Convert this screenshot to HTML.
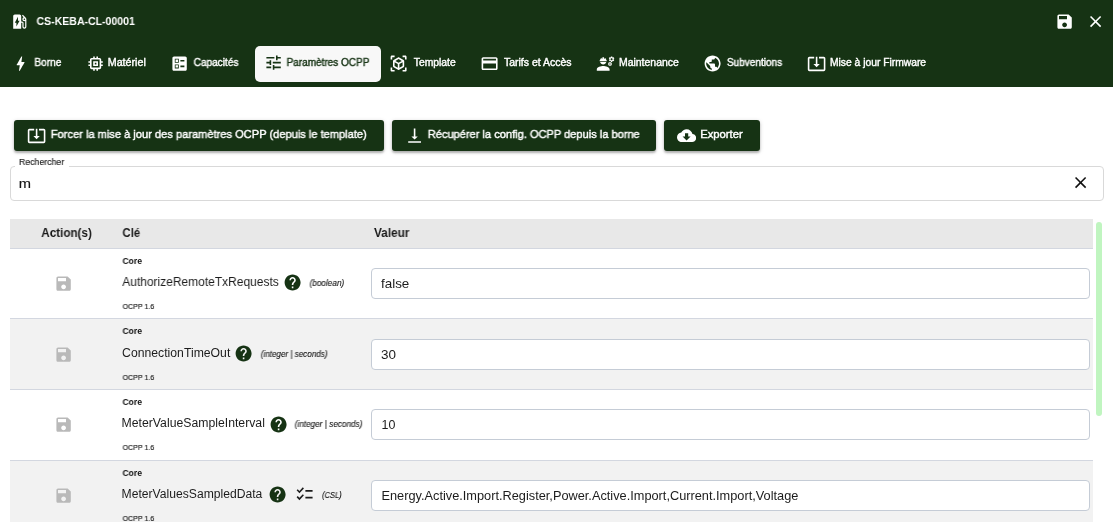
<!DOCTYPE html>
<html lang="fr"><head><meta charset="utf-8"><title>CS-KEBA-CL-00001 - Paramètres OCPP</title><style>
html,body{margin:0;padding:0;background:#fff}
body{width:1113px;height:527px;overflow:hidden;position:relative;font-family:"Liberation Sans",sans-serif}
.t{will-change:transform;position:absolute;white-space:nowrap;line-height:1;transform-origin:0 50%;display:inline-block}
.ic{position:absolute;display:block}
</style></head><body>
<div style="position:absolute;left:0;top:0;width:1113px;height:87px;background:#163314"></div>
<svg class="ic" style="left:10.10px;top:11.90px;width:19.2px;height:19.2px;" viewBox="0 0 24 24"><path fill="#fff" d="M19.77 7.23l.01-.01-3.72-3.72L15 4.56l2.11 2.11c-.94.36-1.61 1.26-1.61 2.33 0 1.38 1.12 2.5 2.5 2.5.36 0 .69-.08 1-.21v7.21c0 .55-.45 1-1 1s-1-.45-1-1V14c0-1.1-.9-2-2-2h-1V5c0-1.1-.9-2-2-2H6c-1.1 0-2 .9-2 2v16h10v-7.5h1.5v5c0 1.38 1.12 2.5 2.5 2.5s2.5-1.12 2.5-2.5V9c0-.69-.28-1.32-.73-1.77zM18 10c-.55 0-1-.45-1-1s.45-1 1-1 1 .45 1 1-.45 1-1 1zM8 18v-4.5H6L10 6v5h2l-4 7z"/></svg>
<span id="t1" class="t " style="left:36.40px;top:15.52px;font-size:11.2px;color:#fff;font-weight:700;transform:translateX(0.50px) scaleX(0.9417);">CS-KEBA-CL-00001</span>
<svg class="ic" style="left:1055.45px;top:11.60px;width:19.2px;height:19.2px;" viewBox="0 0 24 24"><path fill="#fff" d="M17 3H5c-1.11 0-2 .9-2 2v14c0 1.1.89 2 2 2h14c1.1 0 2-.9 2-2V7l-4-4zm-5 16c-1.66 0-3-1.34-3-3s1.34-3 3-3 3 1.34 3 3-1.34 3-3 3zm3-10H5V5h10v4z"/></svg>
<svg class="ic" style="left:1086.45px;top:12.00px;width:19.2px;height:19.2px;" viewBox="0 0 24 24"><path fill="#fff" d="M19 6.41L17.59 5 12 10.59 6.41 5 5 6.41 10.59 12 5 17.59 6.41 19 12 13.41 17.59 19 19 17.59 13.41 12z"/></svg>
<div style="position:absolute;left:255px;top:46px;width:126px;height:36px;background:#f8f8f8;border-radius:5px"></div>
<svg class="ic" style="left:11.15px;top:53.80px;width:19.2px;height:19.2px;" viewBox="0 0 24 24"><path fill="#fff" d="M11 21h-1l1-7H7.5c-.58 0-.57-.32-.38-.66.19-.34.05-.08.07-.12C8.48 10.94 10.42 7.54 13 3h1l-1 7h3.5c.49 0 .56.33.47.51l-.07.15C12.96 17.55 11 21 11 21z"/></svg>
<span id="t2" class="t " style="left:34.60px;top:57.58px;font-size:10.3px;color:#fff;font-weight:400;-webkit-text-stroke:0.4px #fff;transform:translateX(-0.51px) scaleX(0.9787);">Borne</span>
<svg class="ic" style="left:86.00px;top:53.80px;width:19.2px;height:19.2px;" viewBox="0 0 24 24"><path fill="#fff" d="M15 9H9v6h6V9zm-2 4h-2v-2h2v2zm8-2V9h-2V7c0-1.1-.9-2-2-2h-2V3h-2v2h-2V3H9v2H7c-1.1 0-2 .9-2 2v2H3v2h2v2H3v2h2v2c0 1.1.9 2 2 2h2v2h2v-2h2v2h2v-2h2c1.1 0 2-.9 2-2v-2h2v-2h-2v-2h2zm-4 6H7V7h10v10z"/></svg>
<span id="t3" class="t " style="left:108.30px;top:57.58px;font-size:10.3px;color:#fff;font-weight:400;-webkit-text-stroke:0.4px #fff;transform:translateX(-0.26px) scaleX(1.0402);">Matériel</span>
<svg class="ic" style="left:170.15px;top:53.80px;width:19.2px;height:19.2px;" viewBox="0 0 24 24"><path fill="#fff" d="M13 9.5h5v-2h-5v2zm0 7h5v-2h-5v2zm6 4.5H5c-1.1 0-2-.9-2-2V5c0-1.1.9-2 2-2h14c1.1 0 2 .9 2 2v14c0 1.1-.9 2-2 2zM6 11h5V6H6v5zm1-4h3v3H7V7zM6 18h5v-5H6v5zm1-4h3v3H7v-3z"/></svg>
<span id="t4" class="t " style="left:193.80px;top:57.58px;font-size:10.3px;color:#fff;font-weight:400;-webkit-text-stroke:0.4px #fff;transform:translateX(-0.34px) scaleX(0.9759);">Capacités</span>
<svg class="ic" style="left:263.50px;top:53.30px;width:19.2px;height:19.2px;" viewBox="0 0 24 24"><path fill="#163314" d="M3 17v2h6v-2H3zM3 5v2h10V5H3zm10 16v-2h8v-2h-8v-2h-2v6h2zM7 9v2H3v2h4v2h2V9H7zm14 4v-2H11v2h10zm-6-4h2V7h4V5h-4V3h-2v6z"/></svg>
<span id="t5" class="t " style="left:287.10px;top:57.58px;font-size:10.3px;color:#163314;font-weight:400;-webkit-text-stroke:0.4px #163314;transform:translateX(-0.37px) scaleX(0.9707);">Paramètres OCPP</span>
<svg class="ic" style="left:389.10px;top:53.60px;width:19.2px;height:19.2px;" viewBox="0 0 24 24"><path fill="#fff" d="M17,22V20H20V17H22V20.5C22,20.89 21.84,21.24 21.54,21.54C21.24,21.84 20.89,22 20.5,22H17M7,22H3.5C3.11,22 2.76,21.84 2.46,21.54C2.16,21.24 2,20.89 2,20.5V17H4V20H7V22M17,2H20.5C20.89,2 21.24,2.16 21.54,2.46C21.84,2.76 22,3.11 22,3.5V7H20V4H17V2M7,2V4H4V7H2V3.5C2,3.11 2.16,2.76 2.46,2.46C2.76,2.16 3.11,2 3.5,2H7M13,17.25L17,14.95V10.36L13,12.66V17.25M12,10.92L16,8.63L12,6.28L8,8.63L12,10.92M7,14.95L11,17.25V12.66L7,10.36V14.95M18.23,7.59C18.73,7.91 19,8.34 19,8.91V15.23C19,15.8 18.73,16.23 18.23,16.55L12.75,19.73C12.25,20.05 11.75,20.05 11.25,19.73L5.77,16.55C5.27,16.23 5,15.8 5,15.23V8.91C5,8.34 5.27,7.91 5.77,7.59L11.25,4.41C11.5,4.28 11.75,4.22 12,4.22C12.25,4.22 12.5,4.28 12.75,4.41L18.23,7.59Z"/></svg>
<span id="t6" class="t " style="left:413.30px;top:57.58px;font-size:10.3px;color:#fff;font-weight:400;-webkit-text-stroke:0.4px #fff;transform:translateX(0.70px) scaleX(1.0063);">Template</span>
<svg class="ic" style="left:480.40px;top:53.80px;width:19.2px;height:19.2px;" viewBox="0 0 24 24"><path fill="#fff" d="M20 4H4c-1.11 0-1.99.89-1.99 2L2 18c0 1.11.89 2 2 2h16c1.11 0 2-.89 2-2V6c0-1.11-.89-2-2-2zm0 14H4v-6h16v6zm0-10H4V6h16v2z"/></svg>
<span id="t7" class="t " style="left:503.80px;top:57.58px;font-size:10.3px;color:#fff;font-weight:400;-webkit-text-stroke:0.4px #fff;transform:translateX(-0.02px) scaleX(1.0178);">Tarifs et Accès</span>
<svg class="ic" style="left:595.90px;top:53.80px;width:19.2px;height:19.2px;" viewBox="0 0 24 24"><path fill="#fff" d="M9 15c-2.67 0-8 1.34-8 4v2h16v-2c0-2.66-5.33-4-8-4zM22.1 6.84c.01-.11.02-.22.02-.34 0-.12-.01-.23-.03-.34l.74-.58c.07-.05.08-.15.04-.22l-.7-1.21c-.04-.08-.14-.1-.21-.08l-.87.35c-.18-.14-.38-.25-.59-.34l-.13-.93C20.36 3.07 20.28 3 20.2 3h-1.4c-.09 0-.16.07-.17.15l-.13.93c-.21.09-.41.21-.59.34l-.87-.35c-.08-.03-.17 0-.21.08l-.7 1.21c-.04.08-.03.17.04.22l.74.58c-.02.11-.03.23-.03.34 0 .11.01.23.03.34l-.74.58c-.07.05-.08.15-.04.22l.7 1.21c.04.08.14.1.21.08l.87-.35c.18.14.38.25.59.34l.13.93c.01.08.08.15.17.15h1.4c.09 0 .16-.07.17-.15l.13-.93c.21-.09.41-.21.59-.34l.87.35c.08.03.17 0 .21-.08l.7-1.21c.04-.08.03-.17-.04-.22l-.73-.58zm-2.6.91c-.69 0-1.25-.56-1.25-1.25s.56-1.25 1.25-1.25 1.25.56 1.25 1.25-.56 1.25-1.25 1.25zM19.92 11.68l-.5-.87c-.03-.06-.1-.08-.15-.06l-.62.25c-.13-.1-.27-.18-.42-.24l-.09-.66c-.02-.06-.08-.1-.14-.1h-1c-.06 0-.11.04-.12.11l-.09.66c-.15.06-.29.15-.42.24l-.62-.25c-.06-.02-.12 0-.15.06l-.5.87c-.03.06-.02.12.03.16l.53.41c-.01.08-.02.16-.02.24 0 .08.01.17.02.24l-.53.41c-.05.04-.06.11-.03.16l.5.87c.03.06.1.08.15.06l.62-.25c.13.1.27.18.42.24l.09.66c.01.07.06.11.12.11h1c.06 0 .12-.04.12-.11l.09-.66c.15-.06.29-.15.42-.24l.62.25c.06.02.12 0 .15-.06l.5-.87c.03-.06.02-.12-.03-.16l-.52-.41c.01-.08.02-.16.02-.24 0-.08-.01-.17-.02-.24l.53-.41c.05-.04.06-.11.04-.17zm-2.42 1.650c-.46 0-.83-.38-.83-.83 0-.46.38-.83.83-.83s.83.38.83.83c0 .46-.37.83-.83.83zM4.740 9h8.530c.27 0 .49-.22.49-.49v-.02c0-.27-.22-.49-.49-.49H13c0-1.480-.81-2.750-2-3.450V5.500c0 .28-.22.5-.5.5s-.5-.22-.5-.5V4.140C9.680 4.060 9.350 4 9 4s-.68.060-1 .14V5.500c0 .28-.22.5-.5.5S7 5.780 7 5.500v-.95C5.810 5.250 5 6.520 5 8h-.26c-.27 0-.49.22-.49.49v.03c0 .26.22.48.49.48zM9 13c1.860 0 3.410-1.280 3.860-3H5.140c.45 1.720 2 3 3.860 3z"/></svg>
<span id="t8" class="t " style="left:619.60px;top:57.58px;font-size:10.3px;color:#fff;font-weight:400;-webkit-text-stroke:0.4px #fff;transform:translateX(-1.03px) scaleX(1.0143);">Maintenance</span>
<svg class="ic" style="left:703.30px;top:53.80px;width:19.2px;height:19.2px;" viewBox="0 0 24 24"><path fill="#fff" d="M12 2C6.48 2 2 6.48 2 12s4.48 10 10 10 10-4.48 10-10S17.52 2 12 2zm-1 17.93c-3.95-.49-7-3.85-7-7.930 0-.62.08-1.210.21-1.790L9 15v1c0 1.100.9 2 2 2v1.930zm6.900-2.540c-.26-.81-1-1.390-1.900-1.390h-1v-3c0-.55-.45-1-1-1H8v-2h2c.55 0 1-.45 1-1V7h2c1.100 0 2-.9 2-2v-.41c2.930 1.190 5 4.060 5 7.410 0 2.080-.8 3.970-2.100 5.390z"/></svg>
<span id="t9" class="t " style="left:726.90px;top:57.58px;font-size:10.3px;color:#fff;font-weight:400;-webkit-text-stroke:0.4px #fff;transform:translateX(-0.08px) scaleX(0.9741);">Subventions</span>
<svg class="ic" style="left:807.30px;top:53.80px;width:19.2px;height:19.2px;" viewBox="0 0 24 24"><path fill="#fff" d="M12 16.5l4-4h-3v-9h-2v9H8l4 4zm9-13h-6v1.990h6v14.030H3V5.490h6V3.500H3c-1.100 0-2 .9-2 2v14c0 1.100.9 2 2 2h18c1.100 0 2-.9 2-2v-14c0-1.100-.9-2-2-2z"/></svg>
<span id="t10" class="t " style="left:830.60px;top:57.58px;font-size:10.3px;color:#fff;font-weight:400;-webkit-text-stroke:0.4px #fff;transform:translateX(-1.03px) scaleX(1.0000);">Mise à jour Firmware</span>
<div style="position:absolute;left:14px;width:370px;top:120px;height:31px;background:#163314;border-radius:3px;box-shadow:0 2px 2px rgba(0,0,0,.22),0 1px 4px rgba(0,0,0,.18)"></div>
<div style="position:absolute;left:392px;width:264px;top:120px;height:31px;background:#163314;border-radius:3px;box-shadow:0 2px 2px rgba(0,0,0,.22),0 1px 4px rgba(0,0,0,.18)"></div>
<div style="position:absolute;left:664px;width:96px;top:120px;height:31px;background:#163314;border-radius:3px;box-shadow:0 2px 2px rgba(0,0,0,.22),0 1px 4px rgba(0,0,0,.18)"></div>
<svg class="ic" style="left:26.90px;top:125.90px;width:19.2px;height:19.2px;" viewBox="0 0 24 24"><path fill="#fff" d="M12 16.5l4-4h-3v-9h-2v9H8l4 4zm9-13h-6v1.990h6v14.030H3V5.490h6V3.500H3c-1.100 0-2 .9-2 2v14c0 1.100.9 2 2 2h18c1.100 0 2-.9 2-2v-14c0-1.100-.9-2-2-2z"/></svg>
<svg class="ic" style="left:404.65px;top:126.00px;width:19.2px;height:19.2px;" viewBox="0 0 24 24"><path fill="#fff" d="M16 13h-3V3h-2v10H8l4 4 4-4zM4 19v2h16v-2H4z"/></svg>
<svg class="ic" style="left:677.15px;top:126.00px;width:19.2px;height:19.2px;" viewBox="0 0 24 24"><path fill="#fff" d="M19.35 10.04C18.67 6.59 15.64 4 12 4 9.110 4 6.600 5.640 5.350 8.040 2.340 8.360 0 10.910 0 14c0 3.310 2.690 6 6 6h13c2.760 0 5-2.240 5-5 0-2.640-2.050-4.780-4.650-4.960zM17 13l-5 5-5-5h3V9h4v4h3z"/></svg>
<span id="t11" class="t " style="left:50.90px;top:128.82px;font-size:11.2px;color:#fff;font-weight:400;-webkit-text-stroke:0.42px #fff;transform:translateX(-0.22px) scaleX(0.9914);">Forcer la mise à jour des paramètres OCPP (depuis le template)</span>
<span id="t12" class="t " style="left:428.20px;top:128.82px;font-size:11.2px;color:#fff;font-weight:400;-webkit-text-stroke:0.42px #fff;transform:translateX(-0.18px) scaleX(0.9887);">Récupérer la config. OCPP depuis la borne</span>
<span id="t13" class="t " style="left:700.70px;top:128.82px;font-size:11.2px;color:#fff;font-weight:400;-webkit-text-stroke:0.42px #fff;transform:translateX(-0.83px) scaleX(1.0068);">Exporter</span>
<div style="position:absolute;left:10px;top:166px;width:1094px;height:34.5px;border:1px solid #d9d9d9;border-radius:4px;box-sizing:border-box"></div>
<div style="position:absolute;left:15px;top:165px;width:53.5px;height:3px;background:#fff"></div>
<span id="t14" class="t " style="left:19.30px;top:156.87px;font-size:9.6px;color:#1c1c1c;font-weight:400;-webkit-text-stroke:0.15px #1c1c1c;transform:translateX(-0.02px) scaleX(0.9106);">Rechercher</span>
<span id="t15" class="t " style="left:19.80px;top:178.16px;font-size:12.8px;color:#151515;font-weight:400;-webkit-text-stroke:0.15px #151515;transform:translateX(-1.14px) scaleX(1.1483);">m</span>
<svg class="ic" style="left:1071.30px;top:172.70px;width:19.2px;height:19.2px;" viewBox="0 0 24 24"><path fill="#111" d="M19 6.41L17.59 5 12 10.59 6.41 5 5 6.41 10.59 12 5 17.59 6.41 19 12 13.41 17.59 19 19 17.59 13.41 12z"/></svg>
<div style="position:absolute;left:10px;top:219px;width:1083px;height:303px;overflow:hidden">
<div style="position:absolute;left:0;top:0;width:1083px;height:29px;background:#e8e8e8"></div>
</div>
<span id="t16" class="t " style="left:41.50px;top:227.24px;font-size:12.0px;color:#1a1a1a;font-weight:700;transform:translateX(-0.76px) scaleX(0.9740);">Action(s)</span>
<span id="t17" class="t " style="left:123.00px;top:227.24px;font-size:12.0px;color:#1a1a1a;font-weight:700;transform:translateX(-0.61px) scaleX(0.9495);">Clé</span>
<span id="t18" class="t " style="left:374.40px;top:227.24px;font-size:12.0px;color:#1a1a1a;font-weight:700;transform:translateX(-0.04px) scaleX(0.9861);">Valeur</span>
<div style="position:absolute;left:10px;top:219px;width:1083px;height:303px;overflow:hidden">
<div style="position:absolute;left:0;top:29px;width:1083px;height:70px;background:#fff;border-top:1px solid #d3d7e0;box-sizing:border-box"></div>
<div style="position:absolute;left:361px;top:49px;width:719px;height:31px;background:#fff;border:1px solid #c5ccd6;border-radius:4px;box-sizing:border-box"></div>
<div style="position:absolute;left:0;top:99px;width:1083px;height:71px;background:#f2f2f2;border-top:1px solid #d3d7e0;box-sizing:border-box"></div>
<div style="position:absolute;left:361px;top:120px;width:719px;height:31px;background:#fff;border:1px solid #c5ccd6;border-radius:4px;box-sizing:border-box"></div>
<div style="position:absolute;left:0;top:170px;width:1083px;height:71px;background:#fff;border-top:1px solid #d3d7e0;box-sizing:border-box"></div>
<div style="position:absolute;left:361px;top:190px;width:719px;height:31px;background:#fff;border:1px solid #c5ccd6;border-radius:4px;box-sizing:border-box"></div>
<div style="position:absolute;left:0;top:241px;width:1083px;height:71px;background:#f2f2f2;border-top:1px solid #d3d7e0;box-sizing:border-box"></div>
<div style="position:absolute;left:361px;top:261px;width:719px;height:31px;background:#fff;border:1px solid #c5ccd6;border-radius:4px;box-sizing:border-box"></div>
</div>
<div style="position:absolute;left:0;top:0;width:1113px;height:522px;overflow:hidden">
<svg class="ic" style="left:53.90px;top:273.90px;width:19.2px;height:19.2px;" viewBox="0 0 24 24"><path fill="#b9b9b9" d="M17 3H5c-1.11 0-2 .9-2 2v14c0 1.1.89 2 2 2h14c1.1 0 2-.9 2-2V7l-4-4zm-5 16c-1.66 0-3-1.34-3-3s1.34-3 3-3 3 1.34 3 3-1.34 3-3 3zm3-10H5V5h10v4z"/></svg>
<span id="t19" class="t " style="left:122.60px;top:256.55px;font-size:8.8px;color:#0c0c0c;font-weight:700;transform:translateX(-0.50px) scaleX(0.9709);">Core</span>
<span id="t20" class="t " style="left:122.70px;top:276.04px;font-size:12.0px;color:#1c1c1c;font-weight:400;transform:translateX(-0.72px) scaleX(0.9984);">AuthorizeRemoteTxRequests</span>
<span id="t21" class="t " style="left:122.60px;top:302.91px;font-size:7.2px;color:#151515;font-weight:400;-webkit-text-stroke:0.15px #151515;transform:translateX(-0.42px) scaleX(0.9838);">OCPP 1.6</span>
<svg class="ic" style="left:282.80px;top:273.20px;width:19.2px;height:19.2px;" viewBox="0 0 24 24"><path fill="#163314" d="M12 2C6.48 2 2 6.48 2 12s4.48 10 10 10 10-4.48 10-10S17.52 2 12 2zm1 17h-2v-2h2v2zm2.070-7.750l-.9.920C13.450 12.900 13 13.500 13 15h-2v-.5c0-1.100.45-2.100 1.170-2.830l1.240-1.260c.37-.36.59-.86.59-1.410 0-1.100-.9-2-2-2s-2 .9-2 2H8c0-2.210 1.790-4 4-4s4 1.790 4 4c0 .88-.36 1.680-.93 2.250z"/></svg>
<span id="t22" class="t " style="left:309.60px;top:278.99px;font-size:8.4px;color:#111;font-weight:400;font-style:italic;-webkit-text-stroke:0.1px #111;transform:translateX(-0.40px) scaleX(0.9790);">(boolean)</span>
<span id="t23" class="t " style="left:381.60px;top:278.00px;font-size:12.4px;color:#1c1c1c;font-weight:400;transform:translateX(-1.03px) scaleX(1.0829);">false</span>
<svg class="ic" style="left:53.90px;top:344.57px;width:19.2px;height:19.2px;" viewBox="0 0 24 24"><path fill="#b9b9b9" d="M17 3H5c-1.11 0-2 .9-2 2v14c0 1.1.89 2 2 2h14c1.1 0 2-.9 2-2V7l-4-4zm-5 16c-1.66 0-3-1.34-3-3s1.34-3 3-3 3 1.34 3 3-1.34 3-3 3zm3-10H5V5h10v4z"/></svg>
<span id="t24" class="t " style="left:122.60px;top:327.22px;font-size:8.8px;color:#0c0c0c;font-weight:700;transform:translateX(-0.50px) scaleX(0.9710);">Core</span>
<span id="t25" class="t " style="left:122.70px;top:346.71px;font-size:12.0px;color:#1c1c1c;font-weight:400;transform:translateX(-0.89px) scaleX(1.0179);">ConnectionTimeOut</span>
<span id="t26" class="t " style="left:122.60px;top:373.58px;font-size:7.2px;color:#151515;font-weight:400;-webkit-text-stroke:0.15px #151515;transform:translateX(-0.42px) scaleX(0.9838);">OCPP 1.6</span>
<svg class="ic" style="left:234.05px;top:343.87px;width:19.2px;height:19.2px;" viewBox="0 0 24 24"><path fill="#163314" d="M12 2C6.48 2 2 6.48 2 12s4.48 10 10 10 10-4.48 10-10S17.52 2 12 2zm1 17h-2v-2h2v2zm2.070-7.750l-.9.920C13.450 12.900 13 13.500 13 15h-2v-.5c0-1.100.45-2.100 1.170-2.830l1.240-1.260c.37-.36.59-.86.59-1.410 0-1.100-.9-2-2-2s-2 .9-2 2H8c0-2.210 1.790-4 4-4s4 1.790 4 4c0 .88-.36 1.680-.93 2.250z"/></svg>
<span id="t27" class="t " style="left:260.90px;top:349.66px;font-size:8.4px;color:#111;font-weight:400;font-style:italic;-webkit-text-stroke:0.1px #111;transform:translateX(-0.25px) scaleX(0.9640);">(integer | seconds)</span>
<span id="t28" class="t " style="left:381.60px;top:348.67px;font-size:12.4px;color:#1c1c1c;font-weight:400;transform:translateX(-0.92px) scaleX(1.0861);">30</span>
<svg class="ic" style="left:53.90px;top:415.24px;width:19.2px;height:19.2px;" viewBox="0 0 24 24"><path fill="#b9b9b9" d="M17 3H5c-1.11 0-2 .9-2 2v14c0 1.1.89 2 2 2h14c1.1 0 2-.9 2-2V7l-4-4zm-5 16c-1.66 0-3-1.34-3-3s1.34-3 3-3 3 1.34 3 3-1.34 3-3 3zm3-10H5V5h10v4z"/></svg>
<span id="t29" class="t " style="left:122.60px;top:397.89px;font-size:8.8px;color:#0c0c0c;font-weight:700;transform:translateX(-0.50px) scaleX(0.9709);">Core</span>
<span id="t30" class="t " style="left:122.70px;top:417.38px;font-size:12.0px;color:#1c1c1c;font-weight:400;transform:translateX(-1.43px) scaleX(1.0200);">MeterValueSampleInterval</span>
<span id="t31" class="t " style="left:122.60px;top:444.25px;font-size:7.2px;color:#151515;font-weight:400;-webkit-text-stroke:0.15px #151515;transform:translateX(-0.42px) scaleX(0.9838);">OCPP 1.6</span>
<svg class="ic" style="left:269.40px;top:414.54px;width:19.2px;height:19.2px;" viewBox="0 0 24 24"><path fill="#163314" d="M12 2C6.48 2 2 6.48 2 12s4.48 10 10 10 10-4.48 10-10S17.52 2 12 2zm1 17h-2v-2h2v2zm2.070-7.750l-.9.920C13.450 12.900 13 13.500 13 15h-2v-.5c0-1.100.45-2.100 1.170-2.830l1.240-1.260c.37-.36.59-.86.59-1.410 0-1.100-.9-2-2-2s-2 .9-2 2H8c0-2.210 1.790-4 4-4s4 1.790 4 4c0 .88-.36 1.680-.93 2.250z"/></svg>
<span id="t32" class="t " style="left:295.10px;top:420.33px;font-size:8.4px;color:#111;font-weight:400;font-style:italic;-webkit-text-stroke:0.1px #111;transform:translateX(-0.32px) scaleX(0.9783);">(integer | seconds)</span>
<span id="t33" class="t " style="left:382.50px;top:419.34px;font-size:12.4px;color:#1c1c1c;font-weight:400;transform:translateX(-1.53px) scaleX(1.0063);">10</span>
<svg class="ic" style="left:53.90px;top:485.91px;width:19.2px;height:19.2px;" viewBox="0 0 24 24"><path fill="#b9b9b9" d="M17 3H5c-1.11 0-2 .9-2 2v14c0 1.1.89 2 2 2h14c1.1 0 2-.9 2-2V7l-4-4zm-5 16c-1.66 0-3-1.34-3-3s1.34-3 3-3 3 1.34 3 3-1.34 3-3 3zm3-10H5V5h10v4z"/></svg>
<span id="t34" class="t " style="left:122.60px;top:468.56px;font-size:8.8px;color:#0c0c0c;font-weight:700;transform:translateX(-0.50px) scaleX(0.9710);">Core</span>
<span id="t35" class="t " style="left:122.70px;top:488.05px;font-size:12.0px;color:#1c1c1c;font-weight:400;transform:translateX(-1.42px) scaleX(1.0111);">MeterValuesSampledData</span>
<span id="t36" class="t " style="left:122.60px;top:514.92px;font-size:7.2px;color:#151515;font-weight:400;-webkit-text-stroke:0.15px #151515;transform:translateX(-0.42px) scaleX(0.9838);">OCPP 1.6</span>
<svg class="ic" style="left:268.15px;top:485.21px;width:19.2px;height:19.2px;" viewBox="0 0 24 24"><path fill="#163314" d="M12 2C6.48 2 2 6.48 2 12s4.48 10 10 10 10-4.48 10-10S17.52 2 12 2zm1 17h-2v-2h2v2zm2.070-7.750l-.9.920C13.450 12.900 13 13.500 13 15h-2v-.5c0-1.100.45-2.100 1.170-2.830l1.240-1.260c.37-.36.59-.86.59-1.410 0-1.100-.9-2-2-2s-2 .9-2 2H8c0-2.210 1.790-4 4-4s4 1.790 4 4c0 .88-.36 1.680-.93 2.250z"/></svg>
<svg class="ic" style="left:294.60px;top:484.71px;width:19.2px;height:19.2px;height:20.4px;margin-top:-0.6px;" viewBox="0 0 24 24" preserveAspectRatio="none"><path fill="#1c1c1c" d="M22 7h-9v2h9V7zm0 8h-9v2h9v-2zM5.540 11L2 7.460l1.410-1.410 2.120 2.120 4.240-4.240 1.410 1.410L5.540 11zm0 8L2 15.460l1.410-1.410 2.120 2.120 4.240-4.240 1.410 1.410L5.540 19z"/></svg>
<span id="t37" class="t " style="left:322.00px;top:491.00px;font-size:8.4px;color:#111;font-weight:400;font-style:italic;-webkit-text-stroke:0.1px #111;transform:translateX(0.09px) scaleX(0.8954);">(CSL)</span>
<span id="t38" class="t " style="left:382.20px;top:490.01px;font-size:12.4px;color:#1c1c1c;font-weight:400;transform:translateX(-0.55px) scaleX(1.0302);">Energy.Active.Import.Register,Power.Active.Import,Current.Import,Voltage</span>
</div>
<div style="position:absolute;left:1096px;top:222px;width:6px;height:193.5px;border-radius:3px;background:#c0f5c0"></div>
</body></html>
